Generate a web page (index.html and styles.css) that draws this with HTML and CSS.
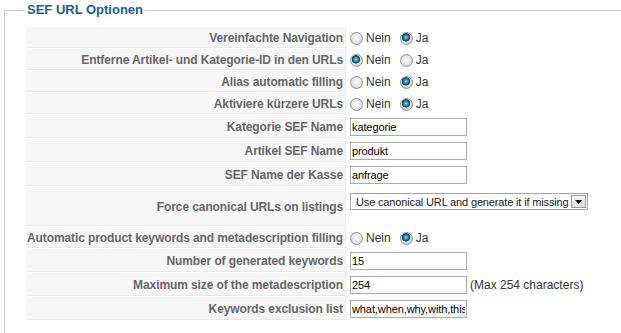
FILE: index.html
```html
<!DOCTYPE html>
<html lang="de">
<head>
<meta charset="utf-8">
<title>SEF URL Optionen</title>
<link rel="stylesheet" href="styles.css">
</head>
<body>
<fieldset class="panel">
  <legend class="legend">SEF URL Optionen</legend>
  <div class="form">
    <div class="key r">Vereinfachte Navigation</div>
    <div class="val r">
      <input class="radio" type="radio" name="a" id="a0"><label for="a0">Nein</label>
      <input class="radio gap" type="radio" name="a" id="a1" checked><label for="a1">Ja</label>
    </div>

    <div class="key r">Entferne Artikel- und Kategorie-ID in den URLs</div>
    <div class="val r">
      <input class="radio" type="radio" name="b" id="b0" checked><label for="b0">Nein</label>
      <input class="radio gap" type="radio" name="b" id="b1"><label for="b1">Ja</label>
    </div>

    <div class="key r">Alias automatic filling</div>
    <div class="val r">
      <input class="radio" type="radio" name="c" id="c0"><label for="c0">Nein</label>
      <input class="radio gap" type="radio" name="c" id="c1" checked><label for="c1">Ja</label>
    </div>

    <div class="key r">Aktiviere kürzere URLs</div>
    <div class="val r">
      <input class="radio" type="radio" name="d" id="d0"><label for="d0">Nein</label>
      <input class="radio gap" type="radio" name="d" id="d1" checked><label for="d1">Ja</label>
    </div>

    <div class="key i">Kategorie SEF Name</div>
    <div class="val i"><input class="text" type="text" value="kategorie"></div>

    <div class="key i">Artikel SEF Name</div>
    <div class="val i"><input class="text" type="text" value="produkt"></div>

    <div class="key i">SEF Name der Kasse</div>
    <div class="val i"><input class="text" type="text" value="anfrage"></div>

    <div class="key t">Force canonical URLs on listings</div>
    <div class="val t">
      <div class="select">
        <span class="select-text">Use canonical URL and generate it if missing</span>
        <span class="select-btn"><svg width="7" height="4" viewBox="0 0 7 4"><path d="M0 0h7L3.5 4z" fill="#000"/></svg></span>
      </div>
    </div>

    <div class="key r">Automatic product keywords and metadescription filling</div>
    <div class="val r">
      <input class="radio" type="radio" name="e" id="e0"><label for="e0">Nein</label>
      <input class="radio gap" type="radio" name="e" id="e1" checked><label for="e1">Ja</label>
    </div>

    <div class="key i">Number of generated keywords</div>
    <div class="val i"><input class="text" type="text" value="15"></div>

    <div class="key i">Maximum size of the metadescription</div>
    <div class="val i"><input class="text" type="text" value="254"><span class="hint">(Max 254 characters)</span></div>

    <div class="key i">Keywords exclusion list</div>
    <div class="val i"><input class="text" type="text" value="what,when,why,with,this"></div>
  </div>
</fieldset>
</body>
</html>
```

FILE: styles.css
```css
html, body {
  margin: 0;
  padding: 0;
  background: #fff;
  overflow: hidden;
}
body {
  font-family: "Liberation Sans", Arial, sans-serif;
  font-size: 12px;
  color: #333;
}
.panel {
  margin: 0 0 0 4px;
  width: 700px;
  border: 1px solid #cccccc;
  padding: 6px 0 40px 20px;
  box-sizing: border-box;
}
.legend {
  padding: 0 2px;
  font-size: 13px;
  line-height: 20px;
  font-weight: bold;
  color: #146295;
}
.form {
  display: grid;
  grid-template-columns: 320px 1fr;
  gap: 1px;
  padding: 1px;
}
.key {
  box-sizing: border-box;
  display: flex;
  align-items: center;
  justify-content: flex-end;
  padding: 1px 2px 0 3px;
  background: #f6f6f6;
  border-bottom: 1px solid #e9e9e9;
  border-right: 1px solid #e9e9e9;
  color: #666;
  font-weight: bold;
  font-size: 12px;
  letter-spacing: -0.1px;
  white-space: nowrap;
}
.val {
  display: flex;
  align-items: center;
  padding-left: 3px;
  padding-top: 1px;
  box-sizing: border-box;
  white-space: nowrap;
}
.r { height: 21px; }
.i { height: 23px; }
.t { height: 39px; }
.val.t { align-items: flex-start; padding-top: 6px; }
.radio {
  appearance: none;
  -webkit-appearance: none;
  box-sizing: border-box;
  width: 13px;
  height: 13px;
  margin: 0 3px 0 0;
  border-radius: 50%;
  border: 1px solid #929292;
  background: radial-gradient(circle at 50% 45%, #fbfbfb 0, #ececec 3px, #d9d9d9 6px);
  flex: none;
}
.radio:checked {
  background: radial-gradient(circle at 45% 40%, #a6e6fa 0, #3aa6cf 1.4px, #16708f 2.8px, #0b3c55 3.9px, #e2e2e2 4.4px, #d6d6d6 6px);
}
.radio.gap { margin-left: 9px; }
label { color: #333; }
.text {
  box-sizing: border-box;
  width: 117px;
  height: 18px;
  margin: 0;
  padding: 0 1px;
  border: 1px solid #ababab;
  font-family: "Liberation Sans", Arial, sans-serif;
  font-size: 11px;
  letter-spacing: -0.1px;
  color: #000;
  background: #fff;
  outline: none;
}
.hint {
  margin-left: 3px;
  color: #333;
}
.select {
  box-sizing: border-box;
  width: 238px;
  height: 17px;
  display: flex;
  align-items: center;
  padding-right: 1px;
  border: 1px solid #a5a5a5;
  background: #fff;
}
.select-text {
  flex: 1;
  padding-left: 5px;
  font-size: 11px;
  letter-spacing: -0.15px;
  color: #222;
}
.select-btn {
  box-sizing: border-box;
  width: 15px;
  height: 13px;
  display: flex;
  align-items: center;
  justify-content: center;
  border: 1px solid #9a9a9a;
  background: linear-gradient(#f7f7f7, #dcdcdc);
}
```
